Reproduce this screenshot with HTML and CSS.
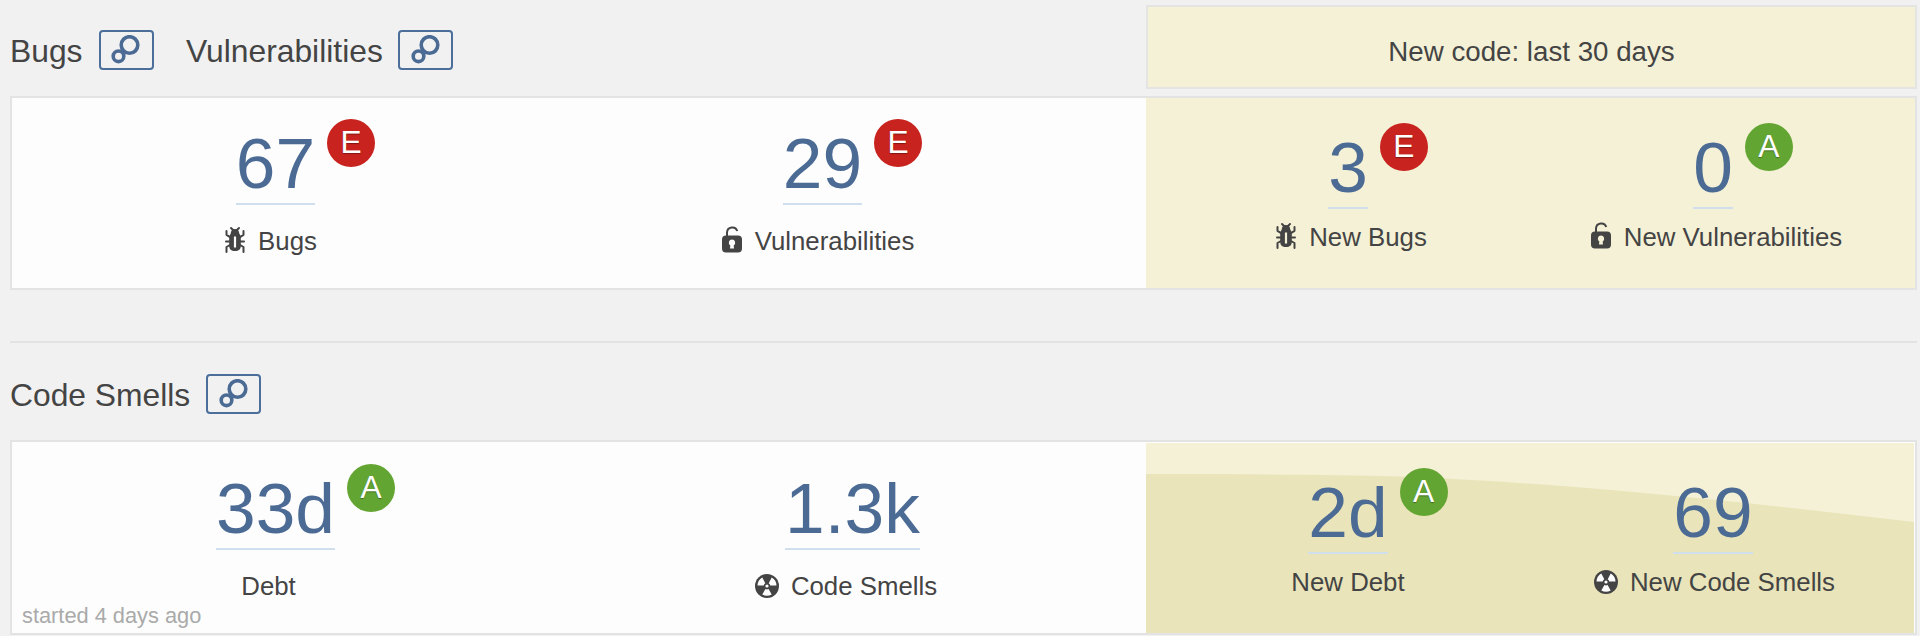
FILE: index.html
```html
<!DOCTYPE html>
<html lang="en">
<head>
<meta charset="utf-8">
<title>Project overview</title>
<link rel="stylesheet" href="styles.css">
</head>
<body>
<svg width="0" height="0" class="defs">
  <symbol id="links" viewBox="0 0 30 30"><circle cx="18.5" cy="10" r="8.300" fill="none" stroke="currentColor" stroke-width="3.600"/><circle cx="7.500" cy="21.300" r="5.300" fill="none" stroke="currentColor" stroke-width="3.600"/></symbol>
  <symbol id="bug" viewBox="0 0 20 27"><g fill="none" stroke="currentColor" stroke-width="2" stroke-linecap="round" stroke-linejoin="round"><path d="M6 2l3 3M14 2l-3 3M1.500 5v3.800l4 2.500M18.500 5v3.800l-4 2.500M1 15.500h4M15 15.500h4M5 19l-3.500 2v5M15 19l3.500 2v5"/></g><path fill="currentColor" fill-rule="evenodd" d="M10 3c3 0 4 2 4.300 4.500L15.800 10.500v9.500c0 3-2 5-5.800 5s-5.800-2-5.800-5v-9.500L5.700 7.500C6 5 7 3 10 3zM8.900 10.500v11h2.200v-11z"/></symbol>
  <symbol id="lock" viewBox="0 0 20 27"><path d="M5 12V6.500a5.300 5.300 0 0 1 10.300-1.500" fill="none" stroke="currentColor" stroke-width="2"/><path fill="currentColor" fill-rule="evenodd" d="M4 9.500h12a4 4 0 0 1 4 4v9a4 4 0 0 1-4 4H4a4 4 0 0 1-4-4v-9a4 4 0 0 1 4-4zM10 13.500a3.200 3.200 0 0 0-1.700 5.900L8 22.500h4l-.3-3.100A3.200 3.200 0 0 0 10 13.500z"/></symbol>
  <symbol id="smell" viewBox="0 0 24 24"><circle cx="12" cy="12" r="12" fill="currentColor"/><g class="blade"><path d="M2.500 11.500A9.500 9.500 0 0 1 7.300 3.600L10.300 9.200A3.300 3.300 0 0 0 8.700 11.500z"/><path d="M21.500 11.500A9.500 9.500 0 0 0 16.700 3.600L13.700 9.200A3.300 3.300 0 0 1 15.300 11.500z"/><path d="M7.300 20.400A9.500 9.500 0 0 0 16.700 20.400L13.600 15A3.300 3.300 0 0 1 10.400 15z"/><circle cx="12" cy="12" r="1.600"/></g></symbol>
</svg>

<main class="page">
  <header class="head">
    <div class="titles">
      <h2>Bugs</h2><a class="link"><svg><use href="#links"/></svg></a>
      <h2 class="second">Vulnerabilities</h2><a class="link"><svg><use href="#links"/></svg></a>
    </div>
    <div class="period">New code: last 30 days</div>
  </header>

  <section class="card">
    <div class="overall">
      <div class="tile"><span class="value">67<b class="rating e">E</b></span><span class="label bugs"><svg class="tall"><use href="#bug"/></svg>Bugs</span></div>
      <div class="tile"><span class="value">29<b class="rating e">E</b></span><span class="label vulns"><svg class="tall"><use href="#lock"/></svg>Vulnerabilities</span></div>
    </div>
    <div class="leak">
      <div class="tile"><span class="value">3<b class="rating e">E</b></span><span class="label new-bugs"><svg class="tall"><use href="#bug"/></svg>New Bugs</span></div>
      <div class="tile"><span class="value">0<b class="rating a">A</b></span><span class="label new-vulns"><svg class="tall"><use href="#lock"/></svg>New Vulnerabilities</span></div>
    </div>
  </section>

  <hr class="rule">

  <header class="head small">
    <div class="titles"><h2>Code Smells</h2><a class="link"><svg><use href="#links"/></svg></a></div>
  </header>

  <section class="card debt-card">
    <div class="overall">
      <div class="tile"><span class="value">33d<b class="rating a">A</b></span><span class="label debt">Debt</span></div>
      <div class="tile wide"><span class="value">1.3k</span><span class="label smells"><svg class="round"><use href="#smell"/></svg>Code Smells</span></div>
      <span class="started">started 4 days ago</span>
    </div>
    <div class="leak history">
      <svg class="area" viewBox="0 0 768 190" preserveAspectRatio="none"><path d="M0 31C90 31 180 31.500 254 33.500C420 40 600 59 768 79V190H0z"/></svg>
      <div class="tile"><span class="value">2d<b class="rating a">A</b></span><span class="label">New Debt</span></div>
      <div class="tile"><span class="value">69</span><span class="label new-smells"><svg class="round"><use href="#smell"/></svg>New Code Smells</span></div>
    </div>
  </section>
</main>
</body>
</html>
```

FILE: styles.css
```css
* { box-sizing: border-box; }
body { margin: 0; background: #f1f1f1; color: #444; font-family: "Liberation Sans", Arial, sans-serif; overflow: hidden; }
.defs { display: block; position: absolute; }
.page { width: 1917px; height: 636px; padding: 5px 0 0 10px; }
.head { display: flex; justify-content: space-between; height: 91px; }
.titles { display: flex; align-items: flex-start; padding-top: 25px; }
h2 { margin: 0; font-size: 31.8px; line-height: 40px; padding-top: 1px; font-weight: 400; width: 88.5px; white-space: nowrap; }
h2.second { width: 212px; margin-left: 32.5px; }
.link { display: flex; justify-content: center; align-items: center; width: 55px; height: 40px; border: 2px solid #4b6f9a; border-radius: 4px; color: #4b6b95; }
.link svg { width: 30px; height: 30px; }
.period { width: 771px; height: 84px; border: 2px solid #e4e4e2; background: #f5f1d6; text-align: center; font-size: 27.7px; line-height: 89px; }
.card { display: flex; height: 194px; border: 2px solid #e3e3e3; background: #fdfdfd; }
.overall, .leak { display: grid; position: relative; }
.overall { width: 1134px; grid-template-columns: 527px 567px; padding-top: 24px; }
.leak { width: 769px; grid-template-columns: 365px 365px; padding: 28px 0 0 19.5px; background: #f5f1d6; }
.tile { display: flex; flex-direction: column; align-items: center; position: relative; }
.tile.wide { padding-left: 60px; }
.value { position: relative; height: 83px; border-bottom: 2px solid #cfdfed; font-size: 71.3px; line-height: 83px; color: #4b6b95; }
.rating { position: absolute; left: calc(100% + 12px); top: -3px; width: 48px; height: 48px; border-radius: 50%; color: #fff; font-size: 31.7px; font-weight: 400; line-height: 46px; text-align: center; text-shadow: 0 1px 1px rgba(0,0,0,.35); }
.rating.e { background: #c8231e; }
.rating.a { background: #63a532; }
.label { display: flex; align-items: center; height: 34px; margin-top: 19px; font-size: 25.8px; line-height: 34px; white-space: nowrap; }
.leak .label { margin-top: 11px; }
.tall { width: 20px; height: 27px; margin: 0 13px 3px 0; }
.round { width: 24px; height: 24px; margin: 0 12px 1px 0; }
.blade { fill: #fdfdfd; }
.leak .blade { fill: #e9e4ba; }
.bugs, .vulns { padding-right: 9px; }
.debt { padding-right: 14px; }
.smells { padding-right: 13px; }
.new-bugs, .new-vulns { padding-left: 7px; }
.new-smells { padding-left: 3px; }
.rule { margin: 51px 0 0; height: 2px; border: 0; background: #e3e3e3; }
.head.small { height: 97px; }
.small .titles { padding-top: 31px; }
.small h2 { width: 196px; }
.started { position: absolute; left: 10px; bottom: 4px; font-size: 21.8px; line-height: 26px; color: #aaa; }
.debt-card { height: 195px; }
.debt-card .overall { padding-top: 25px; }
.history { width: 768px; margin-top: 1px; }
.area { position: absolute; left: 0; top: 0; width: 768px; height: 190px; fill: #e9e4ba; }
```
